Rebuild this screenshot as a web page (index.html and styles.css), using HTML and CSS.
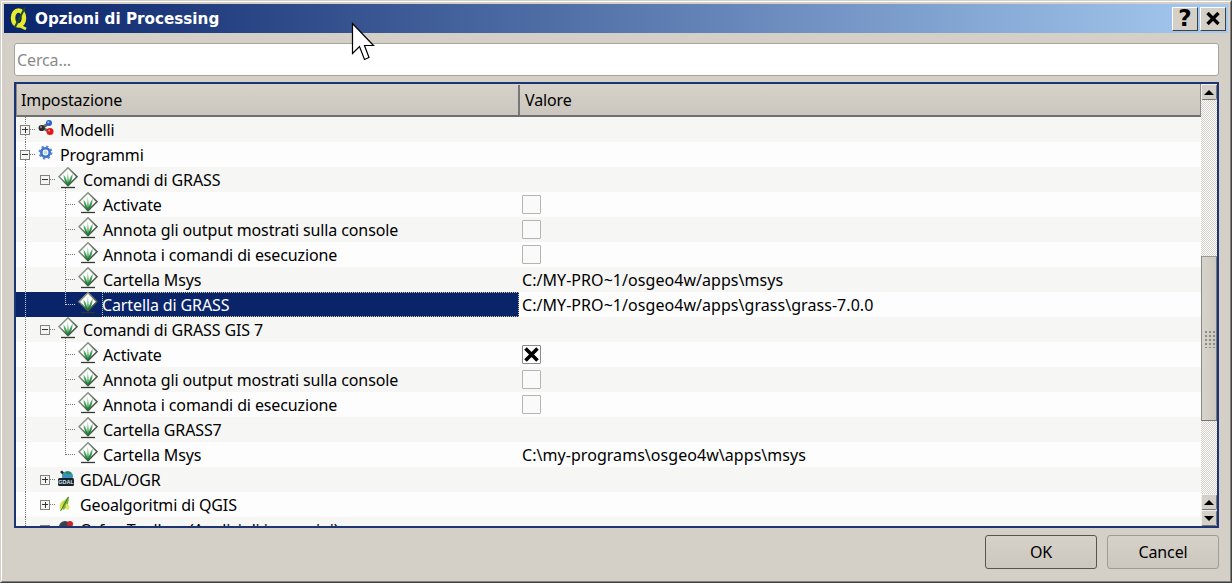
FILE: index.html
```html
<!DOCTYPE html>
<html lang="it">
<head>
<meta charset="utf-8">
<title>Opzioni di Processing</title>
<link rel="stylesheet" href="styles.css">
</head>
<body>
<svg class="defs" width="0" height="0" aria-hidden="true">
  <defs>
    <linearGradient id="edge" x1="0" y1="0" x2="1" y2="1"><stop offset="0" stop-color="#a8b5a4"/><stop offset="1" stop-color="#2f3831"/></linearGradient>
    <linearGradient id="blade" x1="0" y1="0" x2="0" y2="1"><stop offset="0" stop-color="#6cc47a"/><stop offset="1" stop-color="#0a7428"/></linearGradient>
    <symbol id="grass" viewBox="0 0 20 25">
      <path class="dia" d="M10 .8 19 9.7 10 18.6 1 9.7Z" stroke="url(#edge)" stroke-width="1.600"/>
      <path d="M3 20.500h14" stroke="#2e3a2e" stroke-width="1.300"/>
      <path d="M9.200 17.500 9.800 4 11 17.500Z" fill="url(#blade)"/>
      <path d="M10 17.500C9 14 8 10.500 5.500 7.500 5.500 11.500 7 15 8.800 17.500Z" fill="url(#blade)"/>
      <path d="M10 17.500C11 14 12 10 14.700 6.500 14.700 11.500 13 15 11.300 17.500Z" fill="url(#blade)"/>
    </symbol>
    <symbol id="models" viewBox="0 0 16 25">
      <path d="M4 11 11 6M4 11 12 14.500" stroke="#6a6a6a" stroke-width="2.800"/>
      <circle cx="3.600" cy="11" r="3.100" fill="#2c2c2c"/>
      <circle cx="3" cy="10" r="1" fill="#999"/>
      <circle cx="11" cy="6" r="3" fill="#2f62c8"/>
      <circle cx="10.300" cy="5.200" r="1" fill="#a8c4f4"/>
      <circle cx="12" cy="14.500" r="3.500" fill="#e01818"/>
      <circle cx="11.200" cy="13.500" r="1" fill="#f6a0a0"/>
    </symbol>
    <symbol id="gear" viewBox="0 0 16 25">
      <circle cx="7.500" cy="10.500" r="6" fill="none" stroke="#5d8ad6" stroke-width="2" stroke-dasharray="2.300 2.400"/>
      <circle cx="7.500" cy="10.500" r="4.200" fill="none" stroke="#3f74c8" stroke-width="2.600"/>
      <circle cx="7.500" cy="10.500" r="2" fill="#c4d6f2"/>
    </symbol>
    <symbol id="gdal" viewBox="0 0 16 25">
      <path d="M5 8 2 5 4 3.500 7 6.500Z" fill="#222"/>
      <circle cx="9.500" cy="9.500" r="5.500" fill="#3a93b8"/>
      <path d="M7 6c2-2 5-2 6 0-1 2-4 1-6 0Z" fill="#2f8a4a"/>
      <rect x="0" y="11" width="16" height="8" rx="1.500" fill="#17232c"/>
      <text class="gdaltxt" x="8" y="17.300" text-anchor="middle">GDAL</text>
    </symbol>
    <symbol id="qgis" viewBox="0 0 16 25">
      <path d="M3 18C0 15 2 9 7 8c-1 4-1 7-4 10Z" fill="#d9e04c"/>
      <path d="M5 18C3 16 6 8 10.500 4.500 11.500 9 9.500 16 5 18Z" fill="#7fb53a"/>
      <path d="M10 18c-2 0-3-2-2-6 3 0 5 3 2 6Z" fill="#e6e85a"/>
      <path d="M2.500 19 10.500 5" stroke="#3d7a2a" stroke-width="1"/>
    </symbol>
    <symbol id="otb" viewBox="0 0 16 25">
      <circle cx="7" cy="10" r="6" fill="#39424d"/>
      <circle cx="12" cy="7" r="3" fill="#c8222a"/>
      <rect x="1" y="12" width="14" height="6" fill="#202830"/>
    </symbol>
  </defs>
</svg>

<div class="window">
  <div class="window-inner">
    <header class="titlebar">
      <svg class="logo" width="18" height="23" viewBox="0 0 18 23" aria-hidden="true">
        <ellipse cx="8.500" cy="11" rx="5.500" ry="7.500" fill="none" stroke="#e6ec2c" stroke-width="4.500"/>
        <path d="M15 .5 5 20" fill="none" stroke="#24491c" stroke-width="2"/>
        <path d="M8 18 16 22" stroke="#e6ec2c" stroke-width="2.800"/>
      </svg>
      <span class="title">Opzioni di Processing</span>
      <button class="cap">?</button>
      <button class="cap close">
        <svg width="14" height="13" viewBox="0 0 14 13" aria-hidden="true"><path d="M1.500 1 12.500 12M12.500 1 1.500 12" stroke="#000" stroke-width="3.400"/></svg>
      </button>
    </header>

    <main class="content">
      <input class="search" type="text" placeholder="Cerca...">

      <section class="frame">
        <div class="left">
          <div class="head">
            <div class="hname">Impostazione</div>
            <div class="hval">Valore</div>
          </div>
          <div class="rows">
            <div class="row alt"><div class="name"><span class="slot vl"><i class="box plus"></i></span><svg class="ic16"><use href="#models"/></svg><span>Modelli</span></div></div>
            <div class="row"><div class="name"><span class="slot vl"><i class="box"></i></span><svg class="ic16"><use href="#gear"/></svg><span>Programmi</span></div></div>

            <div class="row alt"><div class="name down"><span class="slot vl"></span><span class="slot"><i class="box"></i></span><svg class="ic20"><use href="#grass"/></svg><span>Comandi di GRASS</span></div></div>
            <div class="row"><div class="name"><span class="slot vl"></span><span class="slot"></span><span class="slot tee"></span><svg class="ic20"><use href="#grass"/></svg><span>Activate</span></div><div class="val"><i class="check"></i></div></div>
            <div class="row alt"><div class="name"><span class="slot vl"></span><span class="slot"></span><span class="slot tee"></span><svg class="ic20"><use href="#grass"/></svg><span>Annota gli output mostrati sulla console</span></div><div class="val"><i class="check"></i></div></div>
            <div class="row"><div class="name"><span class="slot vl"></span><span class="slot"></span><span class="slot tee"></span><svg class="ic20"><use href="#grass"/></svg><span>Annota i comandi di esecuzione</span></div><div class="val"><i class="check"></i></div></div>
            <div class="row alt"><div class="name"><span class="slot vl"></span><span class="slot"></span><span class="slot tee"></span><svg class="ic20"><use href="#grass"/></svg><span>Cartella Msys</span></div><div class="val">C:/MY-PRO~1/osgeo4w/apps\msys</div></div>
            <div class="row"><div class="name sel"><span class="slot vl"></span><span class="slot"></span><span class="slot ell"></span><svg class="ic20"><use href="#grass"/></svg><span class="focus">Cartella di GRASS</span></div><div class="val">C:/MY-PRO~1/osgeo4w/apps\grass\grass-7.0.0</div></div>

            <div class="row alt"><div class="name down"><span class="slot vl"></span><span class="slot"><i class="box"></i></span><svg class="ic20"><use href="#grass"/></svg><span>Comandi di GRASS GIS 7</span></div></div>
            <div class="row"><div class="name"><span class="slot vl"></span><span class="slot"></span><span class="slot tee"></span><svg class="ic20"><use href="#grass"/></svg><span>Activate</span></div><div class="val"><i class="check on"><svg width="17" height="17" viewBox="0 0 17 17" aria-hidden="true"><path d="M2.500 2.500 14.500 14.500M14.500 2.500 2.500 14.500" stroke="#000" stroke-width="3.600"/></svg></i></div></div>
            <div class="row alt"><div class="name"><span class="slot vl"></span><span class="slot"></span><span class="slot tee"></span><svg class="ic20"><use href="#grass"/></svg><span>Annota gli output mostrati sulla console</span></div><div class="val"><i class="check"></i></div></div>
            <div class="row"><div class="name"><span class="slot vl"></span><span class="slot"></span><span class="slot tee"></span><svg class="ic20"><use href="#grass"/></svg><span>Annota i comandi di esecuzione</span></div><div class="val"><i class="check"></i></div></div>
            <div class="row alt"><div class="name"><span class="slot vl"></span><span class="slot"></span><span class="slot tee"></span><svg class="ic20"><use href="#grass"/></svg><span>Cartella GRASS7</span></div></div>
            <div class="row"><div class="name"><span class="slot vl"></span><span class="slot"></span><span class="slot ell"></span><svg class="ic20"><use href="#grass"/></svg><span>Cartella Msys</span></div><div class="val">C:\my-programs\osgeo4w\apps\msys</div></div>

            <div class="row alt"><div class="name"><span class="slot vl"></span><span class="slot"><i class="box plus"></i></span><svg class="ic16"><use href="#gdal"/></svg><span>GDAL/OGR</span></div></div>
            <div class="row"><div class="name"><span class="slot vl"></span><span class="slot"><i class="box plus"></i></span><svg class="ic16"><use href="#qgis"/></svg><span>Geoalgoritmi di QGIS</span></div></div>
            <div class="row alt"><div class="name"><span class="slot vl"></span><span class="slot"><i class="box plus"></i></span><svg class="ic16"><use href="#otb"/></svg><span>Orfeo Toolbox (Analisi di immagini)</span></div></div>
          </div>
        </div>

        <aside class="scroll">
          <div class="sbtn up"></div>
          <div class="track t1"></div>
          <div class="thumb"><span class="grip"></span></div>
          <div class="track t2"></div>
          <div class="sbtn up"></div>
          <div class="sbtn dn"></div>
        </aside>
      </section>

      <footer class="actions">
        <button class="btn default">OK</button>
        <button class="btn">Cancel</button>
      </footer>
    </main>
  </div>
</div>

<svg class="cursor" width="26" height="42" viewBox="0 0 26 42" aria-hidden="true">
  <path d="M2.500 2.500V32.500L9.500 25.500 14.500 38.500 19 36.500 14.500 24.500H23.500Z" fill="#fff" stroke="#000" stroke-width="1.200"/>
</svg>
</body>
</html>
```
FILE: styles.css
```css
* { box-sizing: border-box; }
html, body { margin: 0; padding: 0; }
body {
  width: 1232px;
  height: 583px;
  overflow: hidden;
  position: relative;
  background: #d4d0c8;
  font-family: "Noto Sans", "Liberation Sans", sans-serif;
  font-size: 16px;
  letter-spacing: -0.12px;
  color: #000;
}
.defs { display: block; height: 0; }

.window {
  width: 1232px;
  height: 583px;
  border: 1px solid;
  border-color: #d4d0c8 #404040 #404040 #d4d0c8;
}
.window-inner {
  height: 100%;
  padding: 2px;
  border: 1px solid;
  border-color: #fff #808080 #808080 #fff;
  display: flex;
  flex-direction: column;
}

.titlebar {
  height: 29px;
  flex: none;
  display: flex;
  align-items: center;
  padding: 0 2px 0 6px;
  background: linear-gradient(90deg, #0a246a, #a6caf0);
}
.logo { flex: none; }
.title {
  margin-left: 7px;
  margin-right: auto;
  color: #fff;
  font-family: "DejaVu Sans", sans-serif;
  font-weight: 700;
  font-size: 15.2px;
  letter-spacing: 0;
}
.cap {
  width: 26px;
  height: 24px;
  margin-left: 2px;
  padding: 0;
  display: flex;
  align-items: center;
  justify-content: center;
  background: #d4d0c8;
  border: 1px solid;
  border-color: #fff #404040 #404040 #fff;
  font-family: "DejaVu Sans", sans-serif;
  font-weight: 700;
  font-size: 23px;
  line-height: 1;
  color: #000;
}

.content {
  flex: 1;
  min-height: 0;
  display: flex;
  flex-direction: column;
  padding: 10px 9px 0 10px;
}
.search {
  flex: none;
  height: 33px;
  width: 100%;
  padding: 0 2px;
  border: 1px solid #a8a49c;
  border-radius: 3px;
  background: #fff;
  font: inherit;
  letter-spacing: inherit;
  outline: none;
}
.search::placeholder { color: #8a8a8a; opacity: 1; }

.frame {
  flex: none;
  height: 446px;
  margin-top: 6px;
  display: flex;
  border: 2px solid #1c3474;
  background: #fdfdfd;
}
.left { width: 1185px; flex: none; overflow: hidden; display: flex; flex-direction: column; }

.head {
  flex: none;
  height: 33px;
  display: flex;
  padding-top: 1px;
  border-bottom: 2px solid #6f6f6f;
  border-right: 1px solid #8a8a8a;
  border-left: 1px solid #8a8a8a;
  background: linear-gradient(#d6d2ca, #cbc7bf);
}
.hname, .hval { display: flex; align-items: center; }
.hname { width: 503px; flex: none; padding-left: 4px; border-right: 2px solid #777; }
.hval { padding-left: 5px; }

.rows { flex: 1; min-height: 0; overflow: hidden; }
.row { height: 25px; display: flex; }
.row.alt { background: #f6f6f5; }
.name {
  width: 503px;
  flex: none;
  display: flex;
  align-items: center;
  white-space: nowrap;
}
.name.down {
  background: repeating-linear-gradient(#777 0 1px, transparent 1px 2px) 49px bottom / 1px 4px no-repeat;
}
.val {
  display: flex;
  align-items: center;
  padding-left: 3px;
  white-space: nowrap;
  letter-spacing: 0.05px;
}

.slot {
  width: 20px;
  height: 25px;
  flex: none;
  display: flex;
  align-items: center;
  --dot: #777;
}
.slot:has(.box) {
  background: repeating-linear-gradient(90deg, var(--dot) 0 1px, transparent 1px 2px) 14px 12px / 6px 1px no-repeat;
}
.slot.vl {
  background: repeating-linear-gradient(var(--dot) 0 1px, transparent 1px 2px) 9px 0 / 1px 25px no-repeat;
}
.slot.vl:has(.box) {
  background:
    repeating-linear-gradient(var(--dot) 0 1px, transparent 1px 2px) 9px 0 / 1px 25px no-repeat,
    repeating-linear-gradient(90deg, var(--dot) 0 1px, transparent 1px 2px) 14px 12px / 6px 1px no-repeat;
}
.slot.tee {
  background:
    repeating-linear-gradient(var(--dot) 0 1px, transparent 1px 2px) 9px 0 / 1px 25px no-repeat,
    repeating-linear-gradient(90deg, var(--dot) 0 1px, transparent 1px 2px) 10px 12px / 10px 1px no-repeat;
}
.slot.ell {
  background:
    repeating-linear-gradient(var(--dot) 0 1px, transparent 1px 2px) 9px 0 / 1px 13px no-repeat,
    repeating-linear-gradient(90deg, var(--dot) 0 1px, transparent 1px 2px) 10px 12px / 10px 1px no-repeat;
}
.box {
  display: flex;
  width: 10px;
  height: 10px;
  margin-left: 4px;
  border: 1px solid #808080;
  background:
    linear-gradient(#333, #333) center / 6px 1px no-repeat,
    #f4f4f0;
}
.box.plus {
  background:
    linear-gradient(#333, #333) center / 6px 1px no-repeat,
    linear-gradient(#333, #333) center / 1px 6px no-repeat,
    #f4f4f0;
}

.ic16 { width: 16px; height: 25px; flex: none; margin: 0 6px 0 2px; }
.ic20 { width: 20px; height: 25px; flex: none; margin: 0 5px 0 2px; }
.dia { fill: #fff; }
.gdaltxt { font-size: 5.5px; font-weight: 700; fill: #d8e4ea; font-family: "Liberation Sans", sans-serif; letter-spacing: 0; }

.sel { background: #0a246a; color: #fff; }
.sel .slot { --dot: #c8d0e0; }
.sel .dia { fill: #a6b2c8; }
.focus {
  flex: 1;
  align-self: stretch;
  display: flex;
  align-items: center;
  margin-left: -1px;
  outline: 1px dotted #d8c890;
  outline-offset: -1px;
}

.check {
  display: flex;
  width: 19px;
  height: 19px;
  border: 1px solid #b4b4b0;
  border-radius: 1px;
  background: #fafafa;
}
.check.on { border-color: #8a8a8a; background: #fff; }

.scroll {
  flex: 1;
  display: flex;
  flex-direction: column;
}
.sbtn {
  flex: none;
  height: 16px;
  display: flex;
  align-items: center;
  justify-content: center;
  background: #d4d0c8;
  border: 1px solid;
  border-color: #eee #777 #777 #eee;
  border-radius: 2px;
}
.sbtn::before {
  content: "";
  border-left: 5px solid transparent;
  border-right: 5px solid transparent;
}
.sbtn.up::before { border-bottom: 5px solid #000; }
.sbtn.dn::before { border-top: 5px solid #000; }
.track {
  background: repeating-conic-gradient(#d4d0c8 0 25%, #fff 0 50%) 0 0 / 2px 2px;
}
.t1 { height: 156px; flex: none; }
.t2 { flex: 1; min-height: 0; }
.thumb {
  flex: none;
  height: 165px;
  display: flex;
  align-items: center;
  justify-content: center;
  background: linear-gradient(90deg, #d8d4cc, #cdc9c1);
  border: 1px solid;
  border-color: #9a9a9a #777 #777 #888;
}
.grip {
  width: 11px;
  height: 18px;
  background: radial-gradient(circle, #8c8c88 0.8px, transparent 1px) 0 0 / 4px 4px;
}

.actions {
  flex: none;
  display: flex;
  justify-content: flex-end;
  gap: 10px;
  margin-top: 7px;
}
.btn {
  width: 112px;
  height: 34px;
  padding: 0;
  border: 1px solid #9c9c98;
  border-radius: 3px;
  background: linear-gradient(#d6d2ca, #cbc7bf);
  font: inherit;
  letter-spacing: inherit;
  color: #000;
}
.btn.default { border-color: #555; }

.cursor { position: absolute; left: 350px; top: 21px; }
```
